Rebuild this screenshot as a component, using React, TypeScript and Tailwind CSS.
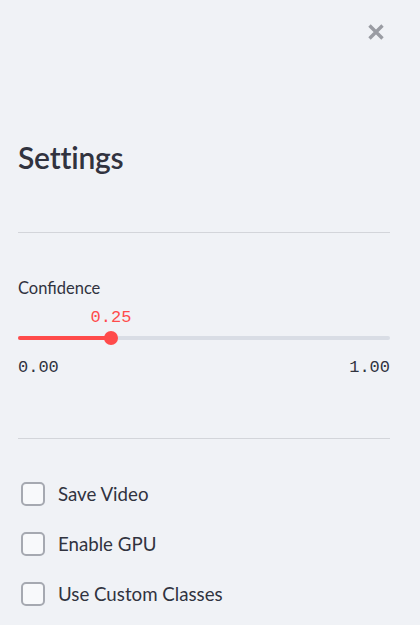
import React from "react";

const font = { fontFamily: '"Source Sans Pro", Lato, "Noto Sans", sans-serif' };
const mono = { fontFamily: '"Liberation Mono", monospace' };

function Check({ label }: { label: string }) {
  return (
    <label className="flex items-center h-[50px] gap-[13px] pl-[3px]">
      <span className="w-[24px] h-[24px] rounded-[5px] border-2 border-[#a6a9b1] bg-[#f8f9fb] shrink-0" />
      <span className="text-[18.7px] text-[#31333f]">{label}</span>
    </label>
  );
}

export default function App() {
  return (
    <div className="w-[420px] h-[625px] bg-[#f0f2f6] overflow-hidden relative" style={font}>
      <div className="flex justify-end pr-[34px] pt-[22px] h-[60px]">
        <svg width="20" height="20" viewBox="0 0 20 20">
          <path d="M3.5 3.5 L16.5 16.5 M16.5 3.5 L3.5 16.5" stroke="#9a9ca3" strokeWidth="3.4" strokeLinecap="butt" />
        </svg>
      </div>
      <div className="pl-[18px] pr-[30px]">
        <h2 className="mt-[77px] text-[30px] font-semibold text-[#31333f] leading-[40px] tracking-[-0.2px]">Settings</h2>
        <div className="mt-[55px] h-px bg-[#d3d5da]" />
        <div className="mt-[45px] text-[16.5px] text-[#31333f] leading-[20px]">Confidence</div>
        <div className="relative h-[60px]">
          <div className="absolute top-[11px] left-[93px] -translate-x-1/2 text-[17px] text-[#ff4b4b] leading-[18px]" style={mono}>0.25</div>
          <div className="absolute top-[38px] left-0 right-0 h-[4px] rounded-full bg-[#d9dde5]" />
          <div className="absolute top-[38px] left-0 w-[93px] h-[4px] rounded-full bg-[#ff4b4b]" />
          <div className="absolute top-[33px] left-[86px] w-[14px] h-[14px] rounded-full bg-[#ff4b4b]" />
        </div>
        <div className="flex justify-between text-[17px] text-[#31333f] leading-[18px] mt-[1px]" style={mono}>
          <span>0.00</span>
          <span>1.00</span>
        </div>
        <div className="mt-[61px] h-px bg-[#d3d5da]" />
        <div className="mt-[30px] flex flex-col">
          <Check label="Save Video" />
          <Check label="Enable GPU" />
          <Check label="Use Custom Classes" />
        </div>
      </div>
    </div>
  );
}
